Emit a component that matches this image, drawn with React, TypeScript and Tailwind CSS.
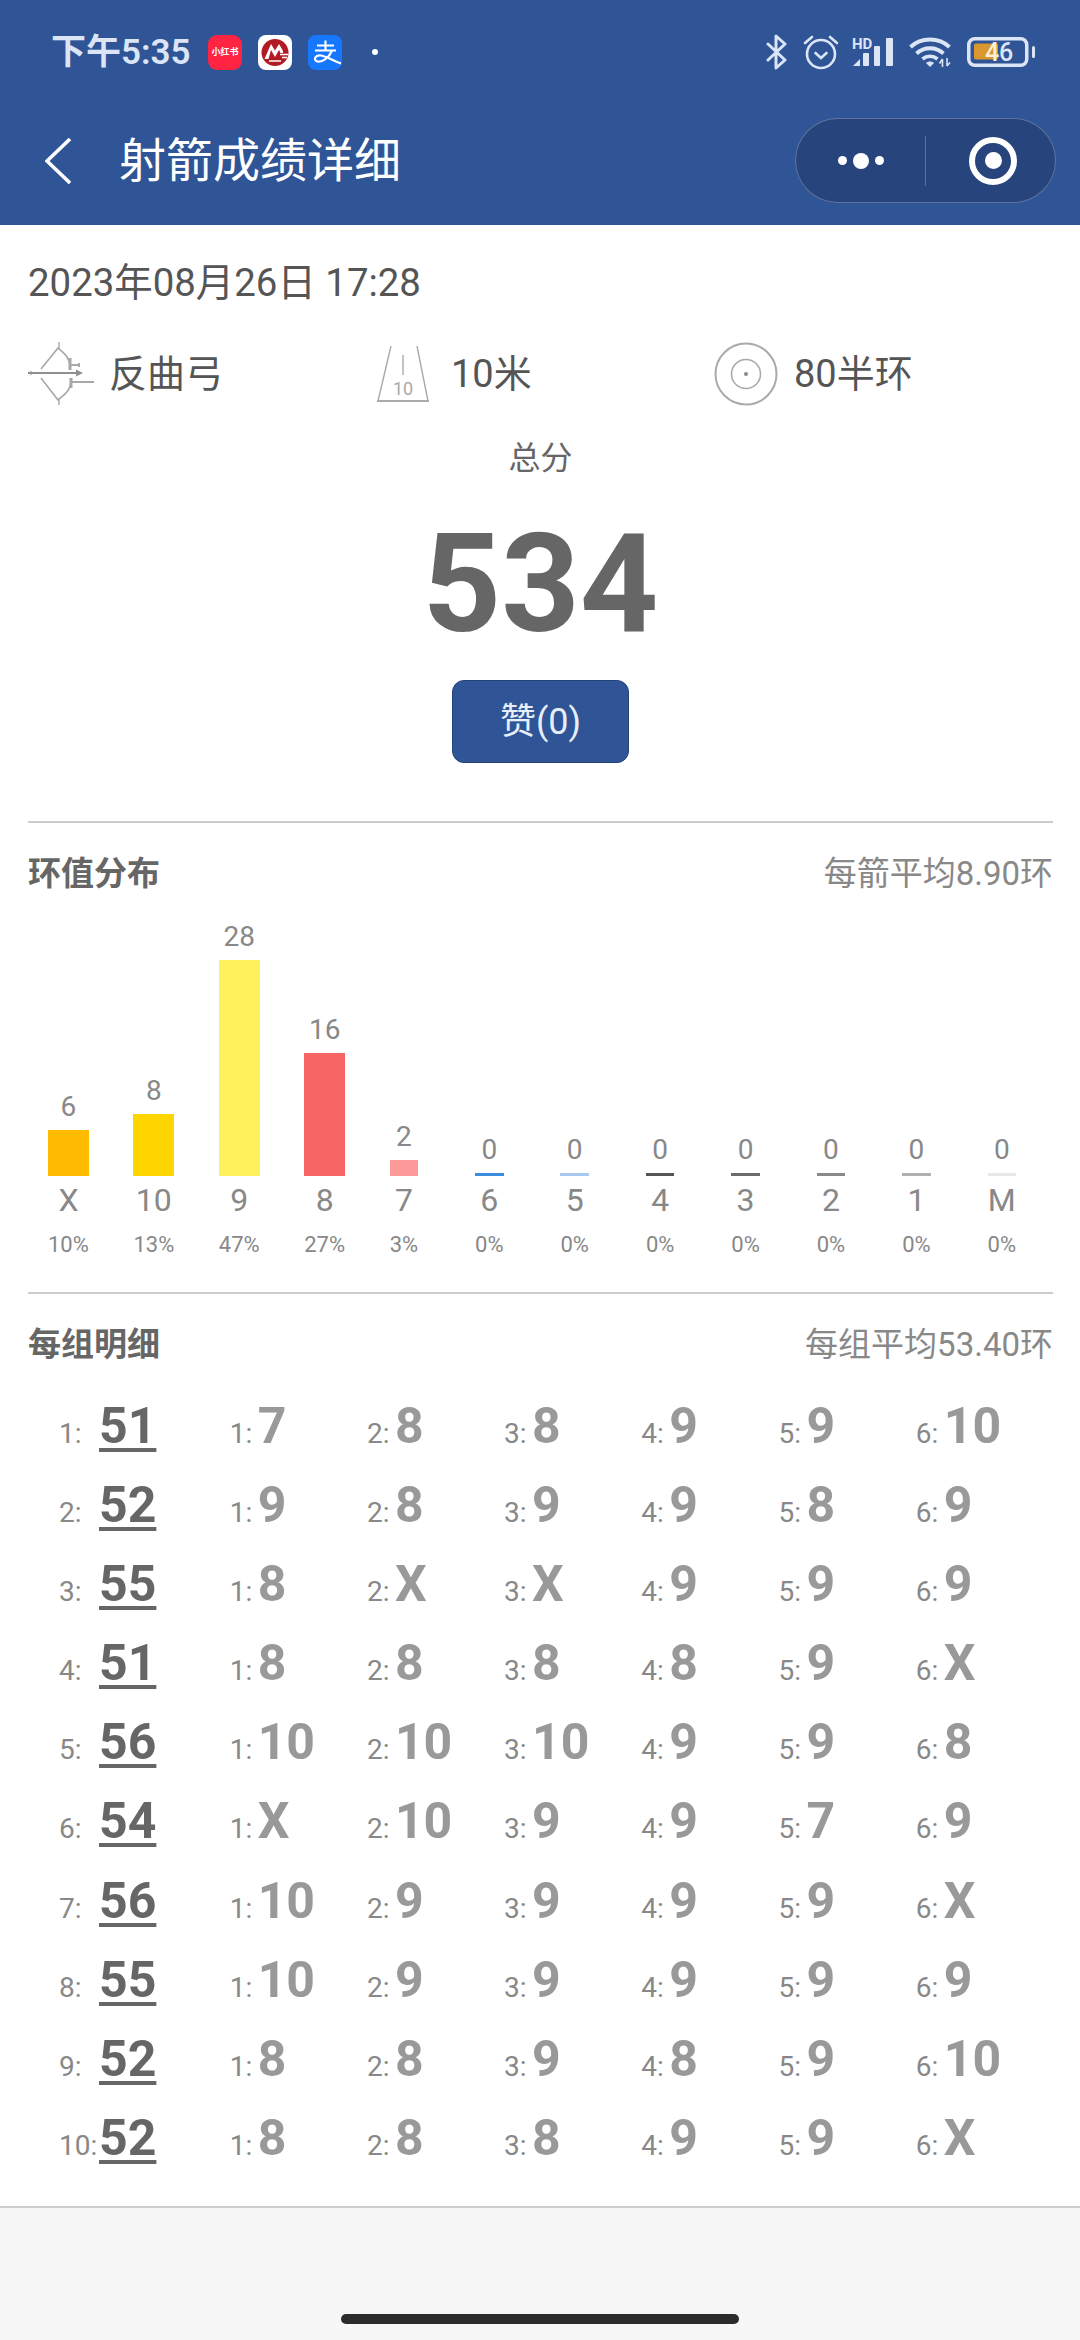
import React from 'react';

const bars = [
  { label: 'X', count: 6, pct: '10%', height: 46, color: 'bg-[#ffbb00]' },
  { label: '10', count: 8, pct: '13%', height: 62, color: 'bg-[#ffd500]' },
  { label: '9', count: 28, pct: '47%', height: 216, color: 'bg-[#fff15c]' },
  { label: '8', count: 16, pct: '27%', height: 123, color: 'bg-[#f66464]' },
  { label: '7', count: 2, pct: '3%', height: 16, color: 'bg-[#fc9a9a]' },
  { label: '6', count: 0, pct: '0%', height: 3, color: 'bg-[#3b8ee0]' },
  { label: '5', count: 0, pct: '0%', height: 3, color: 'bg-[#a9c9f0]' },
  { label: '4', count: 0, pct: '0%', height: 3, color: 'bg-[#555555]' },
  { label: '3', count: 0, pct: '0%', height: 3, color: 'bg-[#6b6b6b]' },
  { label: '2', count: 0, pct: '0%', height: 3, color: 'bg-[#8a8a8a]' },
  { label: '1', count: 0, pct: '0%', height: 3, color: 'bg-[#b0b0b0]' },
  { label: 'M', count: 0, pct: '0%', height: 3, color: 'bg-[#e8e8e8]' },
];

const rounds = [
  { total: 51, arrows: ['7', '8', '8', '9', '9', '10'] },
  { total: 52, arrows: ['9', '8', '9', '9', '8', '9'] },
  { total: 55, arrows: ['8', 'X', 'X', '9', '9', '9'] },
  { total: 51, arrows: ['8', '8', '8', '8', '9', 'X'] },
  { total: 56, arrows: ['10', '10', '10', '9', '9', '8'] },
  { total: 54, arrows: ['X', '10', '9', '9', '7', '9'] },
  { total: 56, arrows: ['10', '9', '9', '9', '9', 'X'] },
  { total: 55, arrows: ['10', '9', '9', '9', '9', '9'] },
  { total: 52, arrows: ['8', '8', '9', '8', '9', '10'] },
  { total: 52, arrows: ['8', '8', '8', '9', '9', 'X'] },
];

const StatusIcons = () => (
  <div className="ml-auto flex items-center pr-[45px]">
    {/* bluetooth */}
    <svg width="21" height="36" viewBox="0 0 21 36" fill="none" stroke="#dbe5f6" strokeWidth="3" strokeLinejoin="round" strokeLinecap="round">
      <path d="M2 10 L19 26 L10 34 V2 L19 10 L2 26" />
    </svg>
    {/* alarm */}
    <svg className="ml-[16px]" width="36" height="36" viewBox="0 0 36 36" fill="none" stroke="#dbe5f6" strokeWidth="2.6" strokeLinecap="round">
      <circle cx="18" cy="20" r="14" />
      <path d="M12.5 19 L18 24 L23.5 19" />
      <path d="M2 9 L9 3" />
      <path d="M34 9 L27 3" />
    </svg>
    {/* hd signal */}
    <svg className="ml-[13px]" width="42" height="32" viewBox="0 0 42 32" fill="#dbe5f6">
      <text x="0" y="13" fontSize="15" fontWeight="700" fontFamily="Roboto, sans-serif">HD</text>
      <path d="M1 30 L8 23 V30 Z" />
      <rect x="11" y="17" width="6" height="13" rx="1" />
      <rect x="22" y="10" width="6" height="20" rx="1" />
      <rect x="34" y="2" width="7" height="28" rx="1" />
    </svg>
    {/* wifi */}
    <svg className="ml-[15px]" width="42" height="32" viewBox="0 0 42 32" fill="none" stroke="#dbe5f6" strokeWidth="3.8">
      <path d="M1.5 11 C12 1 30 1 40.5 11" />
      <path d="M7.5 17.5 C15 10.5 27 10.5 34.5 17.5" />
      <path d="M13.5 23 C18 19.5 24 19.5 28.5 23" />
      <path d="M17 27 L21 31 L25 27 C23 25 19 25 17 27 Z" fill="#dbe5f6" stroke="none" />
      <path d="M33.5 23 V31 M30.5 27.5 L33.5 23" strokeWidth="1.6" />
      <path d="M38 22 V30 M38 30 L41 26.5" strokeWidth="1.6" />
    </svg>
    {/* battery */}
    <svg className="ml-[16px]" width="68" height="30" viewBox="0 0 68 30" fill="none">
      <rect x="1.75" y="1.75" width="58" height="26.5" rx="6" stroke="#dbe5f6" strokeWidth="3.5" />
      <rect x="7" y="6.5" width="24" height="16" rx="2" fill="#d9982f" />
      <rect x="65" y="9" width="3" height="12" rx="1.5" fill="#dbe5f6" />
      <text x="18" y="24" fontSize="25" fontWeight="500" fontFamily="Roboto, sans-serif" fill="#f9efd6">4</text>
      <text x="32" y="24" fontSize="25" fontWeight="500" fontFamily="Roboto, sans-serif" fill="#dbe5f6">6</text>
    </svg>
  </div>
);

const AppIcons = () => (
  <div className="flex items-center gap-4">
    <div className="flex h-[35px] w-[34px] items-center justify-center rounded-[9px] bg-[#ff2442] text-[9px] leading-none font-bold whitespace-nowrap text-white">
      小红书
    </div>
    <svg width="34" height="35" viewBox="0 0 34 35">
      <rect width="34" height="35" rx="8" fill="#ffffff" />
      <circle cx="17" cy="17.5" r="13.5" fill="#b31b24" />
      <path d="M6.5 24 L13 9 L17 15.5 L21 9 L25 16 V18 H22.5 L21 15 L17 22 L13 15 L10.5 24 Z" fill="#ffffff" />
      <path d="M11 26 H23 M22 19.5 H30 M24 22.5 H29" stroke="#ffffff" strokeWidth="1.6" />
    </svg>
    <svg width="34" height="35" viewBox="0 0 34 35" fill="none">
      <rect width="34" height="35" rx="8" fill="#1677ff" />
      <path d="M9 10.5 H26 M17.5 5.5 V15 M7 15.5 H28" stroke="#ffffff" strokeWidth="2.2" />
      <path d="M24 15.5 C21 23 14 27.5 9.5 26.5 C4.5 25 7.5 19.5 13 20.5 C19 21.5 26 26 33 28.5" stroke="#ffffff" strokeWidth="2.2" />
    </svg>
    <div className="ml-[14px] h-[6px] w-[6px] rounded-full bg-white" />
  </div>
);

const BowIcon = () => (
  <svg width="66" height="64" viewBox="8 8 66 64" fill="none" stroke="#a8a8a8" strokeWidth="1.6">
    <path d="M21 35 L38 14 C42 18 50 22 50 33" />
    <path d="M21 44 L38 66 C42 62 51 58 51 46" />
    <path d="M39 8 V15 M39 64 V71" strokeWidth="1.4" />
    <path d="M50 24 V36 M51 44 V54" strokeWidth="3" />
    <path d="M51 31 H59 M59 29 V33 M52 48 H74" strokeWidth="2" />
    <path d="M8 39 H60" stroke="#909090" strokeWidth="2" />
    <path d="M56 35.5 L63 39 L56 42.5 Z M9 36 L14 39 L9 42 L12 39 Z" fill="#909090" stroke="none" />
  </svg>
);

const DistanceIcon = () => (
  <svg width="52" height="56" viewBox="0 0 52 56" fill="none" stroke="#aaaaaa">
    <path d="M14 0 L1 55 M40 0 L51 55" strokeWidth="1.4" />
    <path d="M0 55 H52" strokeWidth="2.2" />
    <path d="M26 9 V29" strokeWidth="1.4" />
    <text x="26" y="49" textAnchor="middle" fontSize="18" fontFamily="Roboto, sans-serif" fill="#aaaaaa" stroke="none">10</text>
  </svg>
);

const TargetIcon = () => (
  <svg width="64" height="64" viewBox="0 0 64 64" fill="none" stroke="#aaaaaa">
    <circle cx="32" cy="32" r="30.5" strokeWidth="2" />
    <circle cx="32" cy="32" r="14.5" strokeWidth="1.6" />
    <circle cx="32" cy="32" r="2" fill="#888888" stroke="none" />
  </svg>
);

const Divider = () => <div className="h-[2px] bg-[#cccccc]" />;

const SectionHead = ({ title, note }: { title: string; note: string }) => (
  <div className="mt-[29px] flex items-center justify-between text-[33px] leading-[44px]">
    <span className="font-bold text-[#666666]">{title}</span>
    <span className="text-[#888888]">{note}</span>
  </div>
);

export default function App() {
  return (
    <div className="flex h-[2340px] w-[1080px] flex-col overflow-hidden bg-[#f7f7f7] font-[Roboto,'Noto_Sans_CJK_SC',sans-serif]">
      <header className="h-[225px] shrink-0 bg-[#2f5597]">
        <div className="flex h-[104px] items-center pl-[51px]">
          <span className="w-[157px] text-[35px] leading-none font-semibold whitespace-nowrap text-[#dbe5f6]">下午5:35</span>
          <AppIcons />
          <StatusIcons />
        </div>
        <div className="flex items-start pt-[14px]">
          <svg className="mt-[20px] ml-[45px]" width="26" height="46" viewBox="0 0 26 46" fill="none" stroke="#ffffff" strokeWidth="3.6">
            <path d="M25 1 L2 23 L25 45" />
          </svg>
          <span className="mt-[14px] ml-[48px] text-[47px] leading-[58px] text-white">射箭成绩详细</span>
          <div className="mr-[24px] ml-auto flex h-[85px] w-[261px] items-center rounded-full border border-white/25 bg-[#27447c]">
            <div className="flex w-[129px] items-center justify-center gap-[6px]">
              <div className="h-[9px] w-[9px] rounded-full bg-white" />
              <div className="h-[16px] w-[16px] rounded-full bg-white" />
              <div className="h-[9px] w-[9px] rounded-full bg-white" />
            </div>
            <div className="h-[50px] w-px bg-white/25" />
            <div className="flex flex-1 justify-center pl-[5px]">
              <div className="flex h-[48px] w-[48px] items-center justify-center rounded-full border-[6px] border-white">
                <div className="h-[17px] w-[17px] rounded-full bg-white" />
              </div>
            </div>
          </div>
        </div>
      </header>

      <main className="h-[1983px] shrink-0 border-b-2 border-[#cccccc] bg-white pr-[27px] pl-[28px]">
        <div className="pt-[36px] text-[38.4px] leading-[44px] whitespace-nowrap text-[#555555]">2023年08月26日 17:28</div>

        <div className="mt-[37px] flex h-[64px] items-center text-[38px] text-[#555555]">
          <div className="flex w-[349px] items-center gap-[15px]">
            <BowIcon />
            <span>反曲弓</span>
          </div>
          <div className="flex w-[337px] items-center gap-[22px]">
            <DistanceIcon />
            <span>10米</span>
          </div>
          <div className="flex items-center gap-[16px]">
            <TargetIcon />
            <span>80半环</span>
          </div>
        </div>

        <div className="mt-[32px] text-center text-[32px] leading-[40px] text-[#666666]">总分</div>
        <div className="mt-[38px] text-center text-[137px] leading-[136px] font-bold text-[#666666]">534</div>
        <button className="mx-auto mt-[28px] flex h-[83px] w-[177px] items-center justify-center rounded-[12px] border border-[#234277] bg-[#2f5597] text-[36px] text-[#e8eef8]">
          赞(0)
        </button>

        <div className="mt-[58px]">
          <Divider />
        </div>
        <SectionHead title="环值分布" note="每箭平均8.90环" />

        <div className="mt-[23px] grid h-[341px] grid-cols-12 items-end">
          {bars.map((bar) => (
            <div key={bar.label} className="pl-[20px]">
              <div className="flex w-fit flex-col items-stretch text-center text-[#888888]">
                <span className="mb-[5px] text-[28px] leading-[36px]">{bar.count}</span>
                <div className={bar.color} style={{ height: bar.height }} />
                <span className="mt-[4px] text-[32px] leading-[40px]">{bar.label}</span>
                <span className="mt-[10px] text-[22px] leading-[30px]">{bar.pct}</span>
              </div>
            </div>
          ))}
        </div>

        <div className="mt-[32px]">
          <Divider />
        </div>
        <SectionHead title="每组明细" note="每组平均53.40环" />

        <div className="mt-[29px] pl-[31px]">
          {rounds.map((round, i) => (
            <div key={i} className="flex h-[79.1px] items-baseline">
              <div className="flex w-[171px] items-baseline">
                <span className="w-[40px] text-[28px] whitespace-nowrap text-[#888888]">{i + 1}:</span>
                <span className="text-[50px] leading-[60px] font-bold text-[#666666] underline decoration-[4px] underline-offset-[5px]">{round.total}</span>
              </div>
              {round.arrows.map((arrow, j) => (
                <div key={j} className="flex w-[137.5px] items-baseline">
                  <span className="w-[28px] text-[28px] text-[#888888]">{j + 1}:</span>
                  <span className="text-[50px] leading-[60px] font-bold text-[#999999]">{arrow}</span>
                </div>
              ))}
            </div>
          ))}
        </div>
      </main>

      <div className="flex flex-1 items-end justify-center pb-[16px]">
        <div className="h-[10px] w-[398px] rounded-full bg-[#2b2b2b]" />
      </div>
    </div>
  );
}
